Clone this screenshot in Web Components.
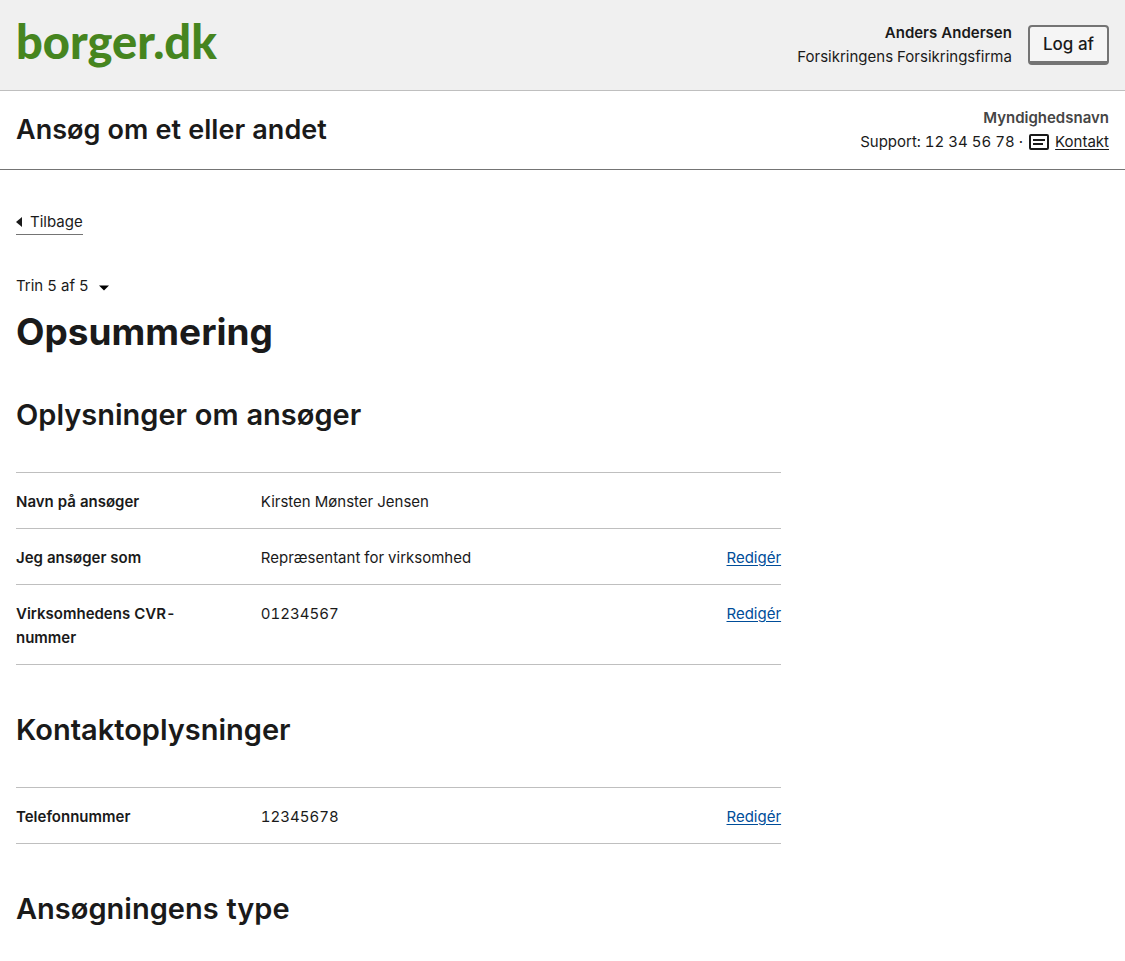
<!DOCTYPE html>
<html lang="da">
<head>
<meta charset="utf-8">
<meta name="viewport" content="width=device-width, initial-scale=1">
<title>Opsummering</title>
<style>
  body {
    margin: 0;
    background: #fff;
    color: #1a1a1a;
    font: 400 15px/24px Inter, "Liberation Sans", sans-serif;
    font-variant-numeric: tabular-nums;
    --green: #46851f;
    --link: #004d99;
    --rule: #bfbfbf;
    --rule-dark: #747474;
  }
</style>
</head>
<body>
<portal-header user="Anders Andersen" company="Forsikringens Forsikringsfirma">borger.dk</portal-header>
<solution-header authority="Myndighedsnavn" phone="12 34 56 78">Ansøg om et eller andet</solution-header>
<form-page>
  <back-link>Tilbage</back-link>
  <step-heading step="Trin 5 af 5">Opsummering</step-heading>
  <summary-section heading="Oplysninger om ansøger">
    <summary-item label="Navn på ansøger">Kirsten Mønster Jensen</summary-item>
    <summary-item label="Jeg ansøger som" editable>Repræsentant for virksomhed</summary-item>
    <summary-item label="Virksomhedens CVR-nummer" editable>01234567</summary-item>
  </summary-section>
  <summary-section heading="Kontaktoplysninger">
    <summary-item label="Telefonnummer" editable>12345678</summary-item>
  </summary-section>
  <summary-section heading="Ansøgningens type"></summary-section>
</form-page>

<script>
  class BaseElement extends HTMLElement {
    constructor() {
      super();
      this.attachShadow({ mode: "open" });
    }
    attr(name) {
      return this.getAttribute(name) || "";
    }
    connectedCallback() {
      this.shadowRoot.innerHTML = this.render();
    }
  }

  customElements.define("portal-header", class extends BaseElement {
    render() {
      return `
        <style>
          :host { display: block; background: #f0f0f0; border-bottom: 1px solid var(--rule); }
          header { display: flex; align-items: center; justify-content: space-between; min-height: 90px; padding: 0 16px; box-sizing: border-box; }
          .logo { font: 900 47px/56px Lato, sans-serif; color: var(--green); text-decoration: none; padding-bottom: 8px; }
          .session { display: flex; align-items: center; gap: 16px; text-align: right; }
          strong, span { display: block; }
          strong { font-weight: 600; }
          button { font: inherit; font-size: 17px; font-weight: 500; line-height: 24px; color: inherit; background: #f5f5f5; padding: 5px 13px; border: 2px solid var(--rule-dark); border-bottom-width: 4px; border-radius: 4px; }
        </style>
        <header>
          <a class="logo" href="#"><slot></slot></a>
          <div class="session">
            <div><strong>${this.attr("user")}</strong><span>${this.attr("company")}</span></div>
            <button type="button">Log af</button>
          </div>
        </header>`;
    }
  });

  customElements.define("solution-header", class extends BaseElement {
    render() {
      return `
        <style>
          :host { display: block; border-bottom: 1px solid var(--rule-dark); }
          header { display: flex; align-items: center; justify-content: space-between; min-height: 78px; padding: 0 16px; }
          .title { font-size: 27px; line-height: 32px; font-weight: 600; }
          .contact { text-align: right; }
          strong { display: block; font-weight: 600; color: #454545; }
          .support { display: flex; align-items: center; justify-content: flex-end; gap: 6px; }
          a { display: flex; align-items: center; gap: 6px; color: inherit; text-decoration: none; }
          a span { text-decoration: underline; text-underline-offset: 2px; }
        </style>
        <header>
          <div class="title"><slot></slot></div>
          <div class="contact">
            <strong>${this.attr("authority")}</strong>
            <div class="support">
              <span>Support: ${this.attr("phone")} ·</span>
              <a href="#kontakt">
                <svg width="20" height="16" viewBox="0 0 20 16" fill="none" stroke="#1a1a1a" stroke-width="2" aria-hidden="true">
                  <rect x="1" y="1" width="18" height="14" rx="1"/>
                  <path d="M4 6h12M4 10h10"/>
                </svg>
                <span>Kontakt</span>
              </a>
            </div>
          </div>
        </header>`;
    }
  });

  customElements.define("form-page", class extends BaseElement {
    render() {
      return `
        <style>
          :host { display: block; }
          main { padding: 40px 16px 24px; }
        </style>
        <main><slot></slot></main>`;
    }
  });

  customElements.define("back-link", class extends BaseElement {
    render() {
      return `
        <style>
          :host { display: flex; }
          a { display: flex; align-items: center; gap: 8px; color: inherit; text-decoration: none; border-bottom: 1px solid var(--rule-dark); }
        </style>
        <a href="#tilbage">
          <svg width="6" height="10" viewBox="0 0 6 10" aria-hidden="true"><path d="M0 5 6 0v10z" fill="#1a1a1a"/></svg>
          <slot></slot>
        </a>`;
    }
  });

  customElements.define("step-heading", class extends BaseElement {
    render() {
      return `
        <style>
          :host { display: block; margin-top: 39px; }
          button { display: flex; align-items: center; gap: 10px; font: inherit; color: inherit; background: none; border: 0; padding: 0; }
          svg { margin-top: 4px; }
          h1 { margin: 8px 0 0; font-size: 37px; line-height: 52px; font-weight: 700; }
        </style>
        <button type="button" aria-expanded="false">
          ${this.attr("step")}
          <svg width="10" height="6" viewBox="0 0 10 6" aria-hidden="true"><path d="M0 .5h10L5 5.5z" fill="#000"/></svg>
        </button>
        <h1><slot></slot></h1>`;
    }
  });

  customElements.define("summary-item", class extends HTMLElement {});

  customElements.define("summary-section", class extends BaseElement {
    render() {
      const rows = [...this.querySelectorAll("summary-item")].map(item => `
        <tr>
          <th scope="row">${item.getAttribute("label")}</th>
          <td>${item.textContent}</td>
          <td class="action">${item.hasAttribute("editable") ? '<a href="#rediger">Redigér</a>' : ""}</td>
        </tr>`).join("");
      return `
        <style>
          :host { display: block; margin-top: 48px; }
          :host(:nth-of-type(1)) { margin-top: 40px; }
          h2 { margin: 0 0 40px; font-size: 29px; line-height: 34px; font-weight: 600; }
          table { width: 70%; table-layout: fixed; border-spacing: 0; border-top: 1px solid var(--rule); }
          th, td { box-sizing: border-box; padding: 17px 0 14px; border-bottom: 1px solid var(--rule); text-align: left; vertical-align: top; }
          th { width: 32%; padding-right: 64px; font-weight: 600; }
          .action { width: 20%; text-align: right; }
          a { color: var(--link); text-underline-offset: 2px; }
        </style>
        <h2>${this.attr("heading")}</h2>
        ${rows && `<table><tbody>${rows}</tbody></table>`}`;
    }
  });
</script>
</body>
</html>
